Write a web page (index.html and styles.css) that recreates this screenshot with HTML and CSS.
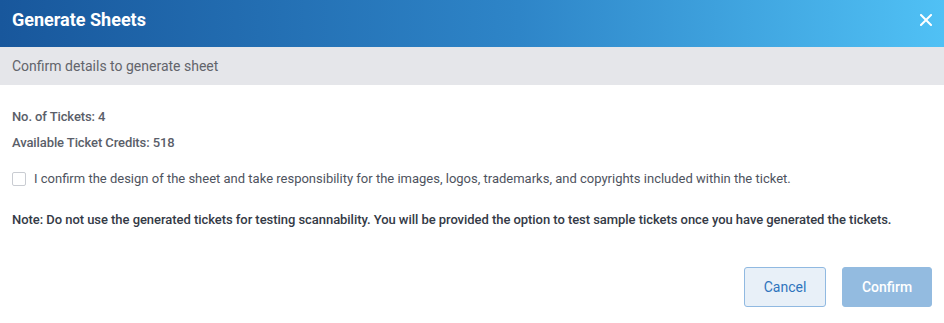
FILE: index.html
```html
<!DOCTYPE html>
<html lang="en">
<head>
    <meta charset="UTF-8">
    <meta name="viewport" content="width=device-width, initial-scale=1.0">
    <title>Generate Sheets</title>
    <link rel="stylesheet" href="styles.css">
</head>
<body>
    <div class="modal">
        <div class="modal-header">
            <h1>Generate Sheets</h1>
            <button class="close" aria-label="Close">
                <svg width="12" height="12" viewBox="0 0 12 12">
                    <path d="M1 1 L11 11 M11 1 L1 11" stroke="#fff" stroke-width="2" stroke-linecap="square"/>
                </svg>
            </button>
        </div>
        <div class="modal-sub">Confirm details to generate sheet</div>

        <div class="modal-body">
            <p class="info">No. of Tickets: 4</p>
            <p class="info">Available Ticket Credits: 518</p>

            <label class="check">
                <input type="checkbox">
                <span class="box"></span>
                <span>I confirm the design of the sheet and take responsibility for the images, logos, trademarks, and copyrights included within the ticket.</span>
            </label>

            <p class="note">Note: Do not use the generated tickets for testing scannability. You will be provided the option to test sample tickets once you have generated the tickets.</p>
        </div>

        <div class="modal-footer">
            <button class="btn btn-cancel">Cancel</button>
            <button class="btn btn-confirm" disabled>Confirm</button>
        </div>
    </div>
</body>
</html>
```

FILE: styles.css
```css
body {
    margin: 0;
    font-family: Roboto, "Liberation Sans", Arial, sans-serif;
    background: #fff;
}
.modal {
    width: 944px;
}
.modal-header {
    height: 47px;
    display: flex;
    align-items: center;
    justify-content: space-between;
    padding: 0 12px;
    box-sizing: border-box;
    background: linear-gradient(to right, #18579c, #2e85c8 55%, #50c1f5);
}
.modal-header h1 {
    margin: 0;
    color: #fff;
    font-size: 18px;
    font-weight: 700;
    margin-top: -8px;
}
.close {
    background: none;
    border: none;
    padding: 0;
    cursor: pointer;
    display: flex;
    margin-top: -8px;
}
.modal-sub {
    height: 38px;
    line-height: 38px;
    background: #e5e6ea;
    color: #62646b;
    font-size: 14px;
    padding: 0 12px;
}
.modal-body {
    padding: 24px 12px 0;
}
.info {
    margin: 0 0 10px;
    font-size: 13px;
    line-height: 16px;
    font-weight: 500;
    letter-spacing: -0.1px;
    color: #5a5e69;
}
.check {
    display: flex;
    align-items: center;
    gap: 8px;
    margin-top: 20px;
    font-size: 13px;
    color: #4e535e;
}
.check input {
    display: none;
}
.box {
    width: 12px;
    height: 12px;
    border: 1px solid #c9ccd2;
    border-radius: 2px;
    background: #fff;
}
.note {
    margin: 26px 0 0;
    font-size: 13px;
    font-weight: 500;
    letter-spacing: -0.05px;
    color: #343a46;
}
.modal-footer {
    display: flex;
    justify-content: flex-end;
    gap: 16px;
    padding: 40px 12px 0;
}
.btn {
    height: 40px;
    border-radius: 3px;
    font-family: Roboto, "Liberation Sans", Arial, sans-serif;
    font-size: 14px;
    cursor: pointer;
}
.btn-cancel {
    width: 82px;
    background: #e8f0f8;
    border: 1px solid #90b9e1;
    color: #2f74bd;
}
.btn-confirm {
    width: 90px;
    background: #93bbe0;
    border: 1px solid #93bbe0;
    color: #fff;
    font-weight: 500;
}
```
